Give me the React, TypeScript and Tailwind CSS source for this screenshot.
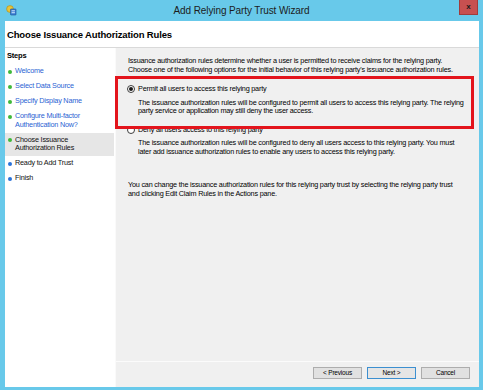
import type { ReactNode } from 'react';

type Step = { label: ReactNode; state: 'done' | 'current' | 'todo' };

const STEPS: Step[] = [
  { label: 'Welcome', state: 'done' },
  { label: 'Select Data Source', state: 'done' },
  { label: 'Specify Display Name', state: 'done' },
  {
    label: (
      <>
        Configure Multi-factor
        <br />
        Authentication Now?
      </>
    ),
    state: 'done',
  },
  {
    label: (
      <>
        Choose Issuance
        <br />
        Authorization Rules
      </>
    ),
    state: 'current',
  },
  { label: 'Ready to Add Trust', state: 'todo' },
  { label: 'Finish', state: 'todo' },
];

function WizardIcon() {
  return (
    <svg width="11" height="11" viewBox="0 0 11 11">
      <circle cx="4" cy="4" r="3.4" fill="#e8c53a" stroke="#a88a1a" strokeWidth="0.6" />
      <rect x="4.5" y="4" width="5.5" height="6" rx="0.6" fill="#3b7fd4" stroke="#1d4f93" strokeWidth="0.6" />
      <rect x="5.6" y="5.3" width="3.3" height="1" fill="#cfe3fb" />
      <rect x="5.6" y="7.2" width="3.3" height="1" fill="#cfe3fb" />
    </svg>
  );
}

function Radio({ checked }: { checked?: boolean }) {
  return (
    <span className="flex h-[8px] w-[8px] shrink-0 items-center justify-center rounded-full border border-[#3c3c3c] bg-white">
      {checked && <span className="h-[4px] w-[4px] rounded-full bg-[#1a1a1a]" />}
    </span>
  );
}

function Button({ children, primary }: { children: ReactNode; primary?: boolean }) {
  return (
    <button
      type="button"
      className={
        primary
          ? 'h-[12px] w-[49px] border border-[#3c8fd0] bg-[#e5e5e5] text-[6.5px] leading-none tracking-[-0.2px] text-black'
          : 'h-[12px] w-[49px] border border-[#adadad] bg-[#e1e1e1] text-[6.5px] leading-none tracking-[-0.2px] text-black'
      }
    >
      {children}
    </button>
  );
}

export default function App() {
  return (
    <div className="flex h-[390px] w-[483px] flex-col bg-[#68c9ea] font-['Liberation_Sans',Arial,sans-serif] text-black">
      {/* title bar */}
      <div className="grid h-[21px] grid-cols-[1fr_auto_1fr] items-start">
        <div className="pl-[6px] pt-[5px]">
          <WizardIcon />
        </div>
        <div className="pt-[5px] text-[10px] leading-[11px] tracking-[-0.1px] text-[#1c1c1c]">
          Add Relying Party Trust Wizard
        </div>
        <div className="flex justify-end pr-[5px]">
          <div className="flex h-[15px] w-[19px] items-center justify-center border border-t-0 border-[#a03c3c] bg-[#c75050] text-[8px] font-bold leading-none text-[#1a1a1a]">
            x
          </div>
        </div>
      </div>

      <div className="mb-[3px] ml-[5px] mr-[4px] flex flex-1 flex-col bg-white">
        {/* header */}
        <div className="h-[27px] border-b border-[#d9d9d9] pl-[2px] pt-[8px] text-[9.5px] font-bold leading-[11px] tracking-[-0.15px]">
          Choose Issuance Authorization Rules
        </div>

        <div className="flex flex-1">
          {/* steps */}
          <div className="w-[110px] shrink-0 bg-white pt-[3px]">
            <div className="pl-[2px] text-[7.5px] font-bold leading-[9px] tracking-[-0.2px]">Steps</div>
            <div className="mr-[1px] mt-[4px]">
              {STEPS.map((step, i) => (
                <div
                  key={i}
                  className={
                    step.state === 'current'
                      ? 'flex items-start gap-[3px] bg-[#e6e6e6] py-[3.25px] pl-[3px]'
                      : 'flex items-start gap-[3px] py-[3.25px] pl-[3px]'
                  }
                >
                  <span
                    className={
                      step.state === 'todo'
                        ? 'mt-[2.5px] h-[4px] w-[4px] shrink-0 rounded-full bg-[#2a72d8]'
                        : 'mt-[2.5px] h-[4px] w-[4px] shrink-0 rounded-full bg-[#3fb93a]'
                    }
                  />
                  <span
                    className={
                      step.state === 'done'
                        ? 'text-[7.25px] leading-[8.5px] tracking-[-0.2px] text-[#2b63d3]'
                        : 'text-[7.25px] leading-[8.5px] tracking-[-0.2px] text-[#111]'
                    }
                  >
                    {step.label}
                  </span>
                </div>
              ))}
            </div>
          </div>

          {/* right side */}
          <div className="flex flex-1 flex-col border-l border-[#fafafa] bg-[#f0f0f0]">
            <div className="relative flex-1 whitespace-nowrap pl-[11px] pt-[9px] text-[7.25px] leading-[8.5px] tracking-[-0.2px]">
              <p className="pl-px">
                Issuance authorization rules determine whether a user is permitted to receive claims for the relying party.
                <br />
                Choose one of the following options for the initial behavior of this relying party's issuance authorization rules.
              </p>

              <div className="mt-[11px] flex items-center gap-[3px]">
                <Radio checked />
                <span>Permit all users to access this relying party</span>
              </div>
              <p className="mt-[5px] pl-[11px]">
                The issuance authorization rules will be configured to permit all users to access this relying party. The relying
                <br />
                party service or application may still deny the user access.
              </p>

              <div className="mt-[10px] flex items-center gap-[3px]">
                <Radio />
                <span>Deny all users access to this relying party</span>
              </div>
              <p className="mt-[5px] pl-[11px]">
                The issuance authorization rules will be configured to deny all users access to this relying party. You must
                <br />
                later add issuance authorization rules to enable any users to access this relying party.
              </p>

              <p className="mt-[25px] pl-px">
                You can change the issuance authorization rules for this relying party trust by selecting the relying party trust
                <br />
                and clicking Edit Claim Rules in the Actions pane.
              </p>

              {/* highlight box drawn over the screenshot */}
              <div className="absolute left-[-1px] top-[28px] h-[53px] w-[359px] border-[3px] border-[#e3141c]" />
            </div>

            <div className="flex h-[26px] items-start justify-end gap-[5px] border-t border-[#fbfbfb] pr-[9px] pt-[5px]">
              <Button>&lt; Previous</Button>
              <Button primary>Next &gt;</Button>
              <Button>Cancel</Button>
            </div>
          </div>
        </div>
      </div>
    </div>
  );
}
